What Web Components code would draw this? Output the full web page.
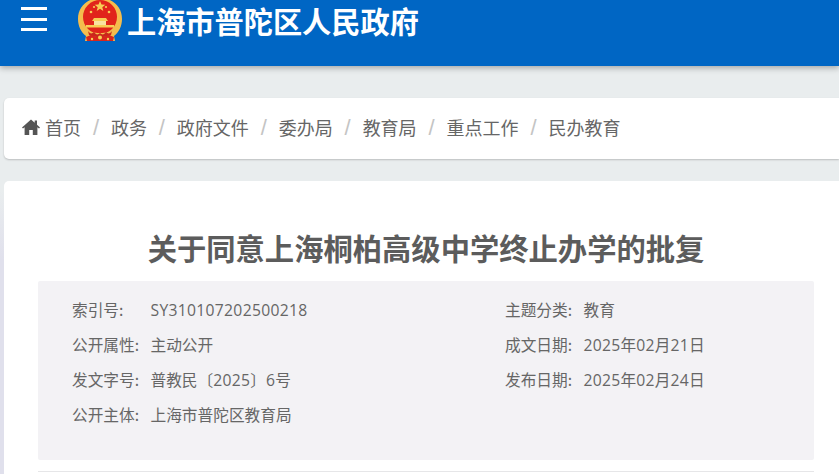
<!DOCTYPE html>
<html lang="zh-CN">
  <head>
    <meta charset="UTF-8" />
    <title>关于同意上海桐柏高级中学终止办学的批复</title>
    <style>
      html, body { margin: 0; padding: 0; height: 474px; overflow: hidden; }
      body {
        background: linear-gradient(#e9edee 190px, #e0e0ec 260px);
        color: #666;
        font-family: "Noto Sans CJK SC", "Liberation Sans", sans-serif;
      }
    </style>
    <script type="module">
      class SiteHeader extends HTMLElement {
        constructor() {
          super();
          const shadow = this.attachShadow({ mode: "open" });
          shadow.innerHTML = `
        <style>
          :host {
            display: flex;
            align-items: flex-start;
            height: 66px;
            box-sizing: border-box;
            background: #0066c4;
            box-shadow: 0 2px 6px rgba(0, 0, 0, 0.3);
            color: #fff;
          }
          .menu {
            display: flex;
            flex-direction: column;
            justify-content: space-between;
            width: 26px;
            height: 24px;
            margin: 7px 0 0 21px;
          }
          .menu i { display: block; height: 3px; background: #fff; }
          svg { display: block; width: 46px; height: 44px; margin: -2px 0 0 30px; flex: none; }
          h1 {
            margin: 4px 0 0 4px;
            font-size: 29.2px;
            line-height: 34px;
            font-weight: 700;
            white-space: nowrap;
            transform: translateY(-1.5px);
          }
        </style>
        <div class="menu"><i></i><i></i><i></i></div>
        <svg viewBox="0 0 46 44">
          <path d="M23 0C10 0 1 9 1 21c0 7 3 13 8 17l-1 5h30l-1-5c5-4 8-10 8-17C45 9 36 0 23 0z" fill="#f4bd4d" />
          <circle cx="23" cy="19" r="17" fill="#e1251b" />
          <path d="M23 3l1.5 3.6 3.8.2-3 2.4 1 3.7-3.3-2.1-3.3 2.1 1-3.7-3-2.4 3.8-.2z" fill="#f7cf55" />
          <circle cx="14" cy="14" r="1.3" fill="#f7cf55" />
          <circle cx="17" cy="9" r="1.1" fill="#f7cf55" />
          <circle cx="29" cy="9" r="1.1" fill="#f7cf55" />
          <circle cx="32" cy="14" r="1.3" fill="#f7cf55" />
          <path d="M17 20h12l2 3H15z" fill="#f7cf55" />
          <path d="M17 23h12v4H17z" fill="#f9e3a0" />
          <path d="M9 27h28v2.5H9z" fill="#f7cf55" />
          <path d="M8 30c3 4 9 5 15 5s12-1 15-5l-1 6c-4 2-9 3-14 3s-10-1-14-3z" fill="#f4bd4d" />
          <path d="M11 33c2 3 4 3 6 1 2 3 4 3 6 1 2 2 4 2 6-1 2 2 4 2 6-1l-1 4c-3 2-7 2-11 2s-8 0-11-2z" fill="#c9271c" />
          <path d="M9 39l5-2c3 1 6 2 9 2s6-1 9-2l5 2-1 4H10z" fill="#d8261c" />
          <circle cx="23" cy="39.5" r="2" fill="#f7cf55" />
          <circle cx="15" cy="41" r="1.2" fill="#f7cf55" />
          <circle cx="31" cy="41" r="1.2" fill="#f7cf55" />
        </svg>
        <h1><slot></slot></h1>
      `;
        }
      }

      class BreadCrumbs extends HTMLElement {
        constructor() {
          super();
          const shadow = this.attachShadow({ mode: "open" });
          shadow.innerHTML = `
        <style>
          :host {
            display: flex;
            align-items: center;
            height: 61px;
            margin: 32px 0 0 4px;
            padding: 0 0 3px 18px;
            box-sizing: border-box;
            background: #fff;
            border-radius: 5px 0 0 5px;
            box-shadow: 0 1px 2px rgba(0, 0, 0, 0.2);
            font-size: 18px;
            color: #666;
          }
          svg { width: 18px; height: 16px; margin-right: 5px; fill: #555; flex: none; }
        </style>
        <svg viewBox="0 0 18 16">
          <path d="M9 .5L0 8.4l1 1.2L2.6 8.3V16h4.6v-5h3.6v5h4.6V8.3L17 9.6l1-1.2-3-2.6V1.5h-2.3v2.3z" />
        </svg>
        <slot></slot>
      `;
        }
      }

      class CrumbItem extends HTMLElement {
        constructor() {
          super();
          const shadow = this.attachShadow({ mode: "open" });
          shadow.innerHTML = `
        <style>
          :host { display: inline-flex; align-items: center; white-space: nowrap; }
          :host(:not(:last-child))::after {
            content: "/";
            color: #c4c4c4;
            margin: 0 11.9px;
            padding-top: 2px;
            font-size: 22px;
            font-family: "Liberation Sans", sans-serif;
          }
        </style>
        <slot></slot>
      `;
        }
      }

      class ArticleCard extends HTMLElement {
        constructor() {
          super();
          const shadow = this.attachShadow({ mode: "open" });
          shadow.innerHTML = `
        <style>
          :host {
            display: block;
            box-sizing: border-box;
            margin: 22px 0 0 4px;
            height: 293px;
            padding: 0 25px 0 34px;
            background: #fff;
            border-radius: 5px 0 0 0;
          }
          h2 {
            margin: 0;
            padding-top: 47px;
            height: 53px;
            line-height: 38px;
            text-align: center;
            font-size: 29.3px;
            font-weight: 700;
            color: #5c5c5c;
            white-space: nowrap;
          }
          .rule { height: 1px; margin-top: 11px; background: #e6e6e8; }
        </style>
        <h2><slot name="title"></slot></h2>
        <slot></slot>
        <div class="rule"></div>
      `;
        }
      }

      class MetaTable extends HTMLElement {
        constructor() {
          super();
          const shadow = this.attachShadow({ mode: "open" });
          shadow.innerHTML = `
        <style>
          :host {
            display: grid;
            grid-template-columns: 433px 1fr;
            grid-auto-rows: 35px;
            align-content: start;
            height: 179px;
            padding: 11px 0 0 34px;
            box-sizing: border-box;
            background: #f3f2f5;
            border-radius: 2px;
          }
        </style>
        <slot></slot>
      `;
        }
      }

      class MetaRow extends HTMLElement {
        constructor() {
          super();
          const shadow = this.attachShadow({ mode: "open" });
          shadow.innerHTML = `
        <style>
          :host {
            display: flex;
            align-items: center;
            font-size: 15.7px;
            line-height: 35px;
            color: #666;
            white-space: nowrap;
          }
          b { font-weight: 400; width: 78.5px; flex: none; }
          ::slotted(span) { font-family: "Open Sans", sans-serif; letter-spacing: 0.3px; }
        </style>
        <b></b><div><slot></slot></div>
      `;
        }
        connectedCallback() {
          this.shadowRoot.querySelector("b").textContent = this.getAttribute("label");
        }
      }

      customElements.define("site-header", SiteHeader);
      customElements.define("bread-crumbs", BreadCrumbs);
      customElements.define("crumb-item", CrumbItem);
      customElements.define("article-card", ArticleCard);
      customElements.define("meta-table", MetaTable);
      customElements.define("meta-row", MetaRow);
    </script>
  </head>
  <body>
    <site-header>上海市普陀区人民政府</site-header>
    <bread-crumbs>
      <crumb-item>首页</crumb-item>
      <crumb-item>政务</crumb-item>
      <crumb-item>政府文件</crumb-item>
      <crumb-item>委办局</crumb-item>
      <crumb-item>教育局</crumb-item>
      <crumb-item>重点工作</crumb-item>
      <crumb-item>民办教育</crumb-item>
    </bread-crumbs>
    <article-card>
      <span slot="title">关于同意上海桐柏高级中学终止办学的批复</span>
      <meta-table>
        <meta-row label="索引号:"><span>SY310107202500218</span></meta-row>
        <meta-row label="主题分类:">教育</meta-row>
        <meta-row label="公开属性:">主动公开</meta-row>
        <meta-row label="成文日期:"><span>2025</span>年<span>02</span>月<span>21</span>日</meta-row>
        <meta-row label="发文字号:">普教民〔<span>2025</span>〕<span>6</span>号</meta-row>
        <meta-row label="发布日期:"><span>2025</span>年<span>02</span>月<span>24</span>日</meta-row>
        <meta-row label="公开主体:">上海市普陀区教育局</meta-row>
      </meta-table>
    </article-card>
  </body>
</html>
